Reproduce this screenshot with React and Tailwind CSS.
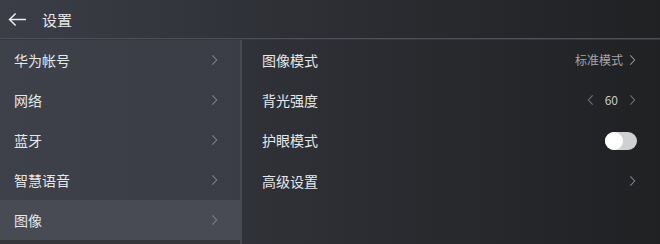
import React from 'react';

const Chevron = ({ dir = 'right', className = '' }) => (
  <svg viewBox="0 0 8 14" className={className} fill="none" stroke="currentColor" strokeWidth="1.3">
    {dir === 'right' ? <path d="M1.5 1.5 L6.5 7 L1.5 12.5" /> : <path d="M6.5 1.5 L1.5 7 L6.5 12.5" />}
  </svg>
);

const menu = ['华为帐号', '网络', '蓝牙', '智慧语音', '图像'];

const App = () => {
  return (
    <div
      className="w-[660px] h-[244px] overflow-hidden flex flex-col bg-gradient-to-r from-[#3b3e47] via-[#2c2e33] to-[#1f2123] text-[#e6e7e9]"
      style={{ fontFamily: '"Noto Sans CJK SC", "Noto Sans", sans-serif' }}
    >
      {/* header */}
      <div className="h-[38px] flex items-center shrink-0">
        <svg viewBox="0 0 20 16" className="w-[19px] h-[15px] ml-[8px] text-[#eceef0]" fill="none" stroke="currentColor" strokeWidth="1.6">
          <path d="M19 8 H2 M8 1.5 L1.5 8 L8 14.5" />
        </svg>
        <span className="ml-[15px] text-[15px] leading-none">设置</span>
      </div>
      <div className="h-[2px] shrink-0 bg-[#4d5058] border-b border-[#35373d]" />

      <div className="flex flex-1 min-h-0">
        {/* left menu */}
        <div className="w-[240px] shrink-0 bg-gradient-to-r from-[#3e414a] to-[#3a3d45] flex flex-col">
          {menu.map((m, i) => (
            <div
              key={m}
              className={`h-[40px] shrink-0 flex items-center justify-between pl-[14px] pr-[22px] text-[14px] ${
                i === 4 ? 'bg-[#484b54]' : ''
              }`}
            >
              <span>{m}</span>
              <Chevron className="w-[7px] h-[12px] text-[#7d8089]" />
            </div>
          ))}
          <div className="flex-1 bg-[#34363c]" />
        </div>
        <div className="w-[2px] shrink-0 bg-[#474a52]" />

        {/* right panel */}
        <div className="flex-1 flex flex-col pl-[20px] pr-[24px] text-[14px]">
          <div className="h-[40px] flex items-center justify-between">
            <span>图像模式</span>
            <div className="flex items-center gap-[6px] text-[#a4a6ab] text-[12px]">
              <span>标准模式</span>
              <Chevron className="w-[7px] h-[12px] text-[#8d9095]" />
            </div>
          </div>
          <div className="h-[40px] flex items-center justify-between">
            <span>背光强度</span>
            <div className="flex items-center text-[#c9cacd] text-[12px]">
              <Chevron dir="left" className="w-[7px] h-[12px] text-[#6d7075]" />
              <span className="mx-[11px]">60</span>
              <Chevron className="w-[7px] h-[12px] text-[#6d7075]" />
            </div>
          </div>
          <div className="h-[41px] flex items-center justify-between">
            <span>护眼模式</span>
            <div className="w-[32px] h-[18px] rounded-full bg-[#cfd0d2] flex items-center mr-[-1px]">
              <div className="w-[18px] h-[18px] rounded-full bg-white" />
            </div>
          </div>
          <div className="h-[40px] flex items-center justify-between">
            <span>高级设置</span>
            <Chevron className="w-[7px] h-[12px] text-[#7d8089]" />
          </div>
        </div>
      </div>
    </div>
  );
};

export default App;
